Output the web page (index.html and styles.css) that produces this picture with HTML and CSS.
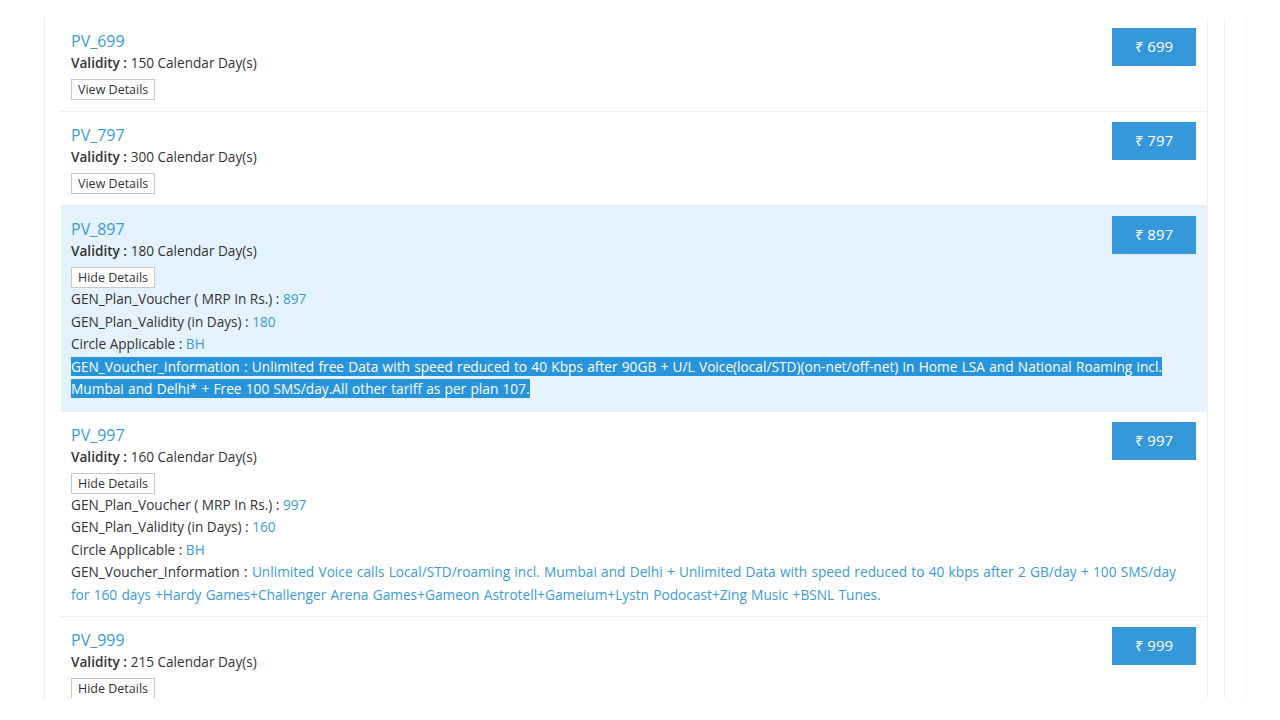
FILE: index.html
```html
<!DOCTYPE html>
<html lang="en">
  <head>
    <meta charset="utf-8" />
    <meta name="viewport" content="width=device-width, initial-scale=1.0" />
    <title>Plan Vouchers</title>
    <link rel="stylesheet" href="styles.css">
  </head>

  <body>
    <div class="side">
      <div class="wrap">
        <section id="planer">
          <article class="plan">
            <div class="hoved">
              <div>
                <h2 class="navn">PV_699</h2>
                <p class="gyldig"><b>Validity :</b> 150 Calendar Day(s)</p>
                <button class="detaljer">View Details</button>
              </div>
              <span class="pris">₹ 699</span>
            </div>
          </article>

          <article class="plan">
            <div class="hoved">
              <div>
                <h2 class="navn">PV_797</h2>
                <p class="gyldig"><b>Validity :</b> 300 Calendar Day(s)</p>
                <button class="detaljer">View Details</button>
              </div>
              <span class="pris">₹ 797</span>
            </div>
          </article>

          <article class="plan valgt">
            <div class="hoved">
              <div>
                <h2 class="navn">PV_897</h2>
                <p class="gyldig"><b>Validity :</b> 180 Calendar Day(s)</p>
                <button class="detaljer">Hide Details</button>
              </div>
              <span class="pris">₹ 897</span>
            </div>
            <ul class="info">
              <li>GEN_Plan_Voucher ( MRP In Rs.) : <span class="vaerdi">897</span></li>
              <li>GEN_Plan_Validity (in Days) : <span class="vaerdi">180</span></li>
              <li>Circle Applicable : <span class="vaerdi">BH</span></li>
              <li class="lang"><span class="markeret">GEN_Voucher_Information : Unlimited free Data with speed reduced to 40 Kbps after 90GB + U/L Voice(local/STD)(on-net/off-net) in Home LSA and National Roaming incl. Mumbai and Delhi* + Free 100 SMS/day.All other tariff as per plan 107.</span></li>
            </ul>
          </article>

          <article class="plan">
            <div class="hoved">
              <div>
                <h2 class="navn">PV_997</h2>
                <p class="gyldig"><b>Validity :</b> 160 Calendar Day(s)</p>
                <button class="detaljer">Hide Details</button>
              </div>
              <span class="pris">₹ 997</span>
            </div>
            <ul class="info">
              <li>GEN_Plan_Voucher ( MRP In Rs.) : <span class="vaerdi">997</span></li>
              <li>GEN_Plan_Validity (in Days) : <span class="vaerdi">160</span></li>
              <li>Circle Applicable : <span class="vaerdi">BH</span></li>
              <li class="lang">GEN_Voucher_Information : <span class="vaerdi">Unlimited Voice calls Local/STD/roaming incl. Mumbai and Delhi + Unlimited Data with speed reduced to 40 kbps after 2 GB/day + 100 SMS/day for 160 days +Hardy Games+Challenger Arena Games+Gameon Astrotell+Gameium+Lystn Podocast+Zing Music +BSNL Tunes.</span></li>
            </ul>
          </article>

          <article class="plan">
            <div class="hoved">
              <div>
                <h2 class="navn">PV_999</h2>
                <p class="gyldig"><b>Validity :</b> 215 Calendar Day(s)</p>
                <button class="detaljer">Hide Details</button>
              </div>
              <span class="pris">₹ 999</span>
            </div>
          </article>
        </section>
      </div>
    </div>
  </body>
</html>
```

FILE: styles.css
```css
body {
  margin: 0;
  background-color: #fff;
  font-family: "Open Sans", "Noto Sans", sans-serif;
  font-size: 13.6px;
  color: #333;
}

/* ydre ramme med de tynde lodrette streger */
.side {
  width: 1246px;
  height: 680px;
  margin-top: 18px;
  border-right: 1px solid #f4f4f4;
  overflow: hidden;
}

.wrap {
  width: 1163px;
  height: 680px;
  margin-left: 44px;
  padding-left: 16px;
  border-left: 1px solid #ececec;
  border-right: 1px solid #eeeeee;
  overflow: hidden;
}

#planer {
  width: 1146px;
  border-right: 1px solid #eeeeee;
}

.plan {
  padding: 10px 11px 11px 10px;
  border-bottom: 1px solid #eeeeee;
}

.valgt {
  background-color: #e4f2fd;
}

.hoved {
  display: flex;
  justify-content: space-between;
  align-items: flex-start;
}

.navn {
  margin: 2px 0 0;
  font-size: 16px;
  font-weight: normal;
  line-height: 22px;
  color: #3c9bd3;
}

.gyldig {
  margin: 0;
  line-height: 22px;
}

.gyldig b {
  font-weight: 600;
}

.detaljer {
  margin-top: 5px;
  height: 21px;
  padding: 0 6px;
  font-family: "Open Sans", "Noto Sans", sans-serif;
  font-size: 12.5px;
  color: #333;
  background-color: #fff;
  border: 1px solid #c8c8c8;
  border-radius: 0;
}

.pris {
  width: 84px;
  height: 38px;
  line-height: 37px;
  text-align: center;
  font-size: 15px;
  color: #fff;
  background-color: #3498db;
}

.info {
  margin: 0 0 -1px;
  padding: 0;
  list-style: none;
}

.info li {
  line-height: 22.5px;
}

/* lange beskrivelser brydes lidt bredere */
.info .lang {
  font-size: 13.7px;
  word-spacing: 0.7px;
}

.vaerdi {
  color: #3c9bd3;
}

.markeret {
  color: #fff;
  background-color: #2894db;
}
```
